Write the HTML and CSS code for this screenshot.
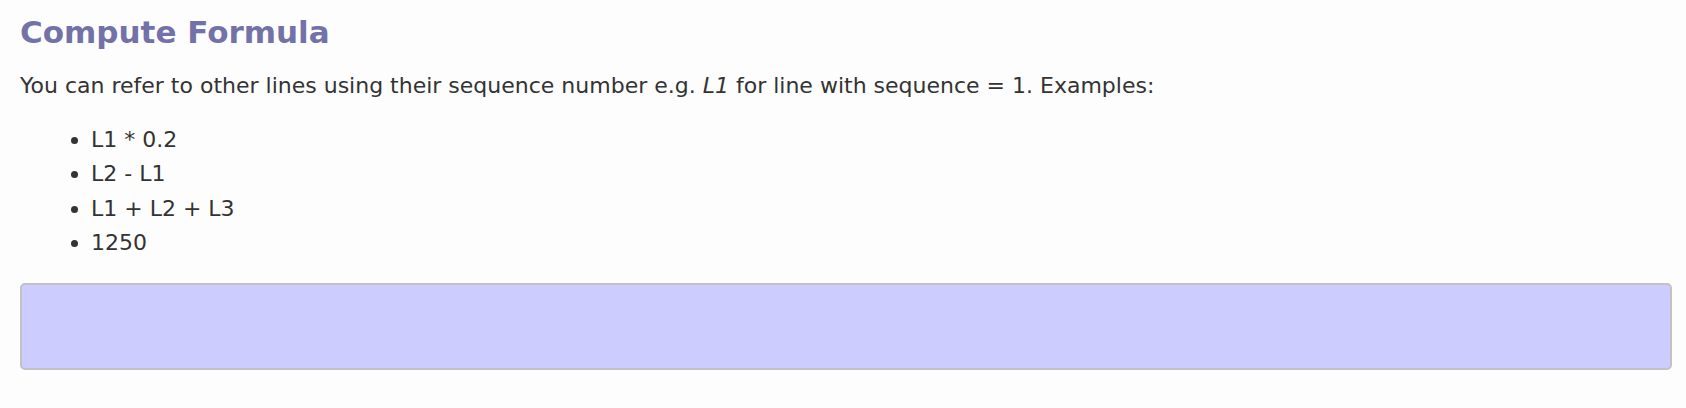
FILE: index.html
```html
<!DOCTYPE html>
<html lang="en">
<head>
  <meta charset="UTF-8" />
  <title>Compute Formula</title>
  <link rel="stylesheet" href="styles.css">
</head>
<body>
  <div class="formula-panel">
    <h2>Compute Formula</h2>
    <p>You can refer to other lines using their sequence number e.g. <em>L1</em> for line with sequence = 1. Examples:</p>
    <ul>
      <li>L1 * 0.2</li>
      <li>L2 - L1</li>
      <li>L1 + L2 + L3</li>
      <li>1250</li>
    </ul>
    <textarea class="formula-input"></textarea>
  </div>
</body>
</html>
```

FILE: styles.css
```css
* {
  box-sizing: border-box;
  margin: 0;
  padding: 0;
}

body {
  background: #fdfdfd;
  color: #333;
  font-family: 'DejaVu Sans', sans-serif;
}

.formula-panel {
  padding: 14px 14px 0 20px;
}

.formula-panel h2 {
  color: #7272a8;
  font-size: 31px;
  font-weight: 700;
  line-height: 36px;
}

.formula-panel p {
  font-size: 22px;
  line-height: 28px;
  margin-top: 22px;
}

.formula-panel ul {
  margin: 23px 0 0 71px;
  font-size: 22px;
  line-height: 34.4px;
}

.formula-input {
  display: block;
  width: 100%;
  height: 87px;
  margin-top: 22px;
  background: #ccccff;
  border: 2px solid #c2c2c2;
  border-radius: 5px;
  resize: none;
}
```
